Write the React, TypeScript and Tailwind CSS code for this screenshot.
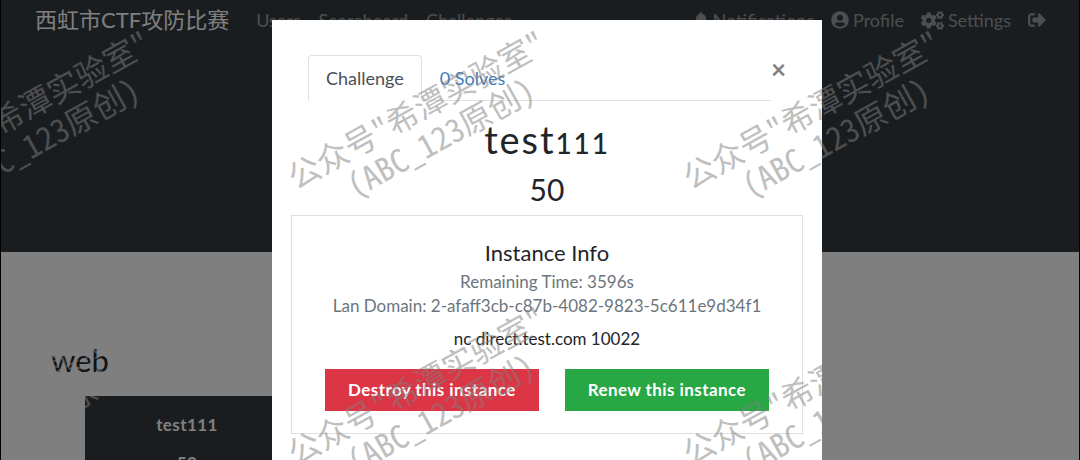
import { useState } from "react"
import { FaBell, FaCogs, FaSignOutAlt, FaUserCircle } from "react-icons/fa"

const NAV_LINKS = ["Users", "Scoreboard", "Challenges"]

const ACCOUNT_LINKS = [
  { label: "Notifications", icon: FaBell, size: "size-4" },
  { label: "Profile", icon: FaUserCircle, size: "size-[18px]" },
  { label: "Settings", icon: FaCogs, size: "size-[23px]" },
]

// Centre points of the repeated watermark
const WATERMARKS = [
  { x: 28, y: 124 },
  { x: 423, y: 124 },
  { x: 818, y: 124 },
  { x: 28, y: 400 },
  { x: 423, y: 400 },
  { x: 818, y: 400 },
]

function Navbar() {
  return (
    <nav className="flex h-10 items-center justify-between pl-[34px] pr-[33px] text-lg text-white/50">
      <div className="flex items-center">
        <a href="#home" className="mr-[27px] text-[22px] leading-9 text-white">
          西虹市CTF攻防比赛
        </a>
        <div className="flex gap-[18px]">
          {NAV_LINKS.map((l) => (
            <a key={l} href={`#${l.toLowerCase()}`}>
              {l}
            </a>
          ))}
        </div>
      </div>
      <div className="flex items-center gap-[17px]">
        {ACCOUNT_LINKS.map(({ label, icon: Icon, size }) => (
          <a key={label} href={`#${label.toLowerCase()}`} className="flex items-center gap-1">
            <Icon className={size} />
            {label}
          </a>
        ))}
        <a href="#logout" aria-label="Logout">
          <FaSignOutAlt />
        </a>
      </div>
    </nav>
  )
}

function ChallengeModal() {
  const [tab, setTab] = useState("challenge")
  const tabClass = "rounded-t border px-[17px] pt-2 pb-2"
  const activeTab = "border-[#dee2e6] border-b-white bg-white text-[#495057]"
  const idleTab = "border-transparent text-[#3b7dbd]"

  return (
    <div role="dialog" aria-label="test111" className="w-[550px] bg-white px-[19px] pt-[35px] pb-12">
      <div className="flex items-start">
        <div role="tablist" className="ml-[17px] flex flex-1 border-b border-[#dee2e6] text-lg">
          <button
            role="tab"
            aria-selected={tab === "challenge"}
            onClick={() => setTab("challenge")}
            className={`-mb-px ${tabClass} ${tab === "challenge" ? activeTab : idleTab}`}
          >
            Challenge
          </button>
          <button
            role="tab"
            aria-selected={tab === "solves"}
            onClick={() => setTab("solves")}
            className={`-mb-px ${tabClass} ${tab === "solves" ? activeTab : idleTab}`}
          >
            0 Solves
          </button>
        </div>
        <button aria-label="Close" className="w-8 pr-[18px] text-[26px] leading-7 font-bold text-[#7f7f7f]">
          ×
        </button>
      </div>

      <h2 className="mt-[18px] text-center text-[38px] leading-10 tracking-wider">
        test<span className="text-[28px] leading-none font-medium">111</span>
      </h2>
      <h3 className="mt-[10px] text-center text-[30px] leading-10">50</h3>

      <section className="mt-[6px] border border-[#dfdfdf] px-6 pt-6 pb-[22px] text-center text-[17px] leading-6">
        <h5 className="text-[22px] leading-[26px]">Instance Info</h5>
        <p className="mt-1 text-[#6c757d]">Remaining Time: 3596s</p>
        <p className="text-[#6c757d]">Lan Domain: 2-afaff3cb-c87b-4082-9823-5c611e9d34f1</p>
        <p className="mt-[9px]">nc direct.test.com 10022</p>
        <div className="mx-[9px] mt-[18px] flex justify-between font-bold tracking-wide text-white">
          <button className="bg-[#dc3545] px-[23px] py-[9px]">Destroy this instance</button>
          <button className="bg-[#28a745] px-[23px] py-[9px]">Renew this instance</button>
        </div>
      </section>
    </div>
  )
}

export default function App() {
  return (
    <div className="relative h-screen overflow-hidden border-x border-black bg-white font-['Lato','Noto_Sans_CJK_SC',sans-serif] text-[#212529]">
      <header className="h-[252px] bg-[#343a40]">
        <Navbar />
      </header>
      <main className="px-[50px] pt-[88px]">
        <h3 className="text-[31px] leading-10">web</h3>
        <button className="mt-4 ml-[34px] flex w-[204px] flex-col items-center gap-3 bg-[#343a40] pt-4 pb-6 text-[17px] font-bold tracking-wide text-white">
          <span>test111</span>
          <span>50</span>
        </button>
      </main>

      <div className="absolute inset-0 bg-black/50" />
      <div className="absolute inset-0 flex items-start justify-center pt-5 pl-[14px]">
        <ChallengeModal />
      </div>

      <div aria-hidden="true" className="pointer-events-none absolute inset-0">
        {WATERMARKS.map((w) => (
          <div
            key={`${w.x}-${w.y}`}
            className="absolute -translate-1/2 -rotate-29 text-center font-['Noto_Sans_Mono_CJK_SC','Noto_Sans_CJK_SC',sans-serif] text-[32px] leading-9 font-medium whitespace-nowrap text-[#808080] opacity-50"
            style={{ left: w.x, top: w.y }}
          >
            <p>公众号"希潭实验室"</p>
            <p className="pl-4">(ABC_123原创)</p>
          </div>
        ))}
      </div>
    </div>
  )
}
